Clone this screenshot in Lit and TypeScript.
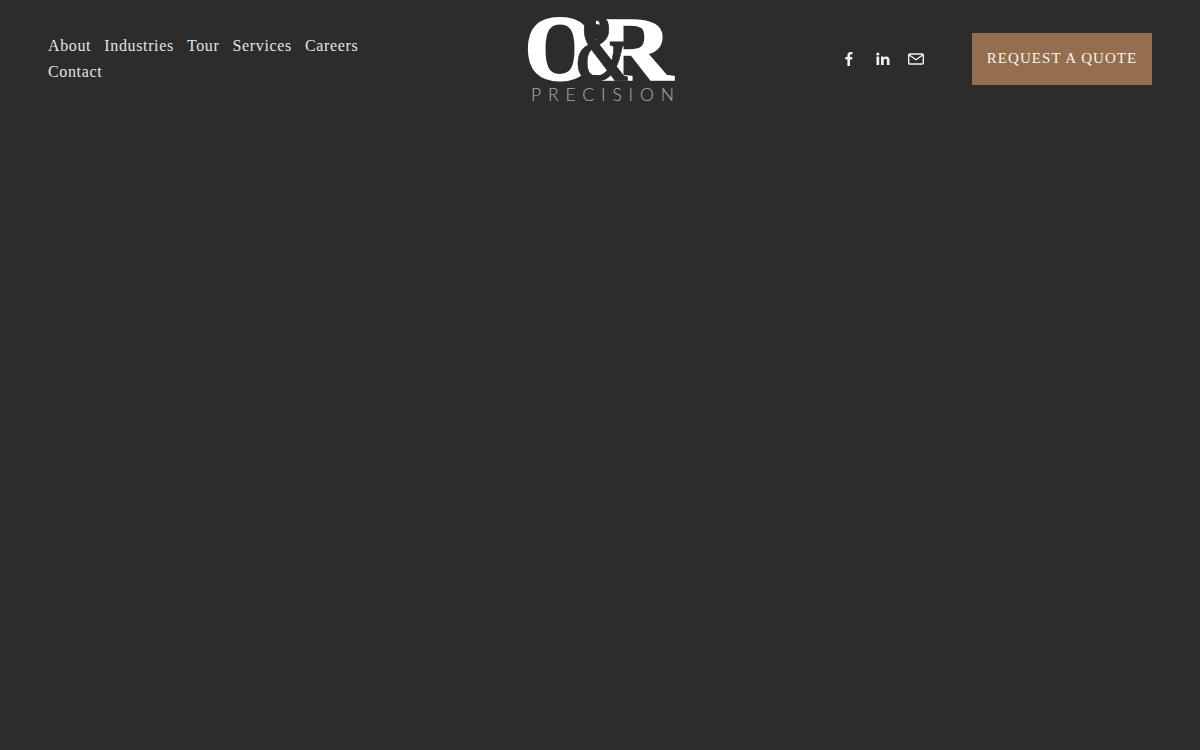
import { LitElement, html, css } from "lit";
import { customElement } from "lit/decorators.js";

@customElement("app-root")
export class AppRoot extends LitElement {
  static styles = css`
    :host {
      display: block;
      min-height: 750px;
      background: #2c2c2c;
      font-family: "Liberation Serif", "Times New Roman", serif;
    }
    header {
      display: grid;
      grid-template-columns: 1fr auto 1fr;
      align-items: center;
      padding: 15px 48px 0;
      height: 88px;
    }
    nav {
      display: flex;
      flex-wrap: wrap;
      column-gap: 13.1px;
      width: 340px;
      font-size: 16px;
      line-height: 26px;
      letter-spacing: 0.64px;
      color: #e4e4e4;
      margin-top: -1px;
    }
    .logo {
      display: block;
      width: 150px;
      height: 88px;
      overflow: visible;
    }
    .logo text { font-family: "Liberation Serif", serif; font-weight: 700; }
    .logo .sub { font-family: "Lato", sans-serif; font-weight: 300; opacity: 0.6; }
    .right {
      display: flex;
      justify-content: flex-end;
      align-items: center;
    }
    .icons {
      display: flex;
      gap: 13.5px;
      margin-right: 46px;
    }
    .icons svg { display: block; width: 20px; height: 20px; }
    .btn {
      display: flex;
      align-items: center;
      justify-content: center;
      width: 180px;
      height: 51px;
      padding-bottom: 1px;
      background: #946e4e;
      color: #f8f3ec;
      font-size: 15px;
      letter-spacing: 1.05px;
      white-space: nowrap;
    }
  `;

  render() {
    return html`
      <header>
        <nav>
          <span>About</span><span>Industries</span><span>Tour</span><span>Services</span><span>Careers</span><span>Contact</span>
        </nav>
        <svg class="logo" viewBox="0 0 150 88" aria-label="O&R Precision">
          <text x="0" y="63.500" font-size="90" fill="#fff" stroke="#fff" stroke-width="3" textLength="70" lengthAdjust="spacingAndGlyphs">O</text>
          <text x="70" y="64.500" font-size="92" fill="#fff" stroke="#fff" stroke-width="1.500" textLength="78" lengthAdjust="spacingAndGlyphs">R</text>
          <rect x="56" y="24" width="26" height="36" fill="#fff"/>
          <text x="49" y="65" font-size="98" fill="#2c2c2c" stroke="#2c2c2c" stroke-width="0.800" textLength="57" lengthAdjust="spacingAndGlyphs">&amp;</text>
          <text class="sub" x="6" y="86" font-size="17.500" fill="#fff" textLength="143" lengthAdjust="spacing">PRECISION</text>
        </svg>
        <div class="right">
          <div class="icons">
            <svg viewBox="0 0 20 20" fill="#f2f2f2"><path d="M8.400 17V10.600H6.300V8.100h2.100V6.300c0-2.100 1.300-3.300 3.200-3.300.9 0 1.700.1 1.900.1v2.200h-1.300c-1 0-1.200.5-1.200 1.200v1.600h2.400l-.3 2.500h-2.100V17z"/></svg>
            <svg viewBox="0 0 20 20" fill="#f2f2f2"><path d="M3.500 7.600h2.700V16H3.500zM4.850 3.500a1.550 1.550 0 1 1 0 3.100 1.550 1.550 0 0 1 0-3.100zM8 7.600h2.500v1.150c.4-.7 1.300-1.350 2.700-1.350 2.700 0 3.300 1.700 3.300 4V16h-2.600v-4c0-1-.1-2.300-1.500-2.300s-1.700 1.100-1.700 2.200V16H8z"/></svg>
            <svg viewBox="0 0 20 20" fill="none" stroke="#f2f2f2" stroke-width="1.400"><rect x="2.700" y="5" width="14.600" height="10" rx="1"/><path d="M3 5.700l7 5 7-5"/></svg>
          </div>
          <div class="btn">REQUEST A QUOTE</div>
        </div>
      </header>
    `;
  }
}
